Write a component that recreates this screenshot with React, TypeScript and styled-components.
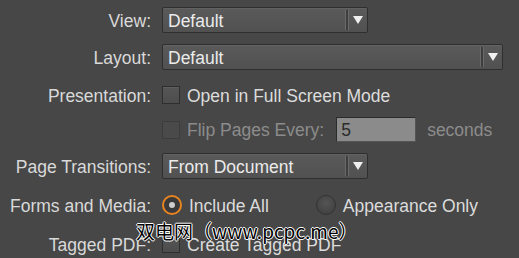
import React from "react";
import styled, { createGlobalStyle } from "styled-components";

const Global = createGlobalStyle`
  html, body { margin: 0; padding: 0; background: #474747; }
  body { font-family: "Liberation Sans", Arial, sans-serif; }
`;

const Page = styled.div`
  position: relative;
  width: 519px;
  height: 258px;
  overflow: hidden;
  background: #474747;
  padding-top: 7px;
  box-sizing: border-box;
`;

const Row = styled.div<{ $top: number; $h: number }>`
  display: flex;
  align-items: center;
  height: ${(p) => p.$h}px;
  margin-top: ${(p) => p.$top}px;
`;

const Label = styled.div`
  width: 151px;
  flex: none;
  text-align: right;
  color: #d9d9d9;
  font-size: 17.5px;
  padding-right: 11px;
  padding-top: 2px;
  box-sizing: content-box;
  white-space: nowrap;
`;

const Controls = styled.div`
  display: flex;
  align-items: center;
`;

const SelectBox = styled.div<{ $w: number }>`
  width: ${(p) => p.$w}px;
  height: 26px;
  box-sizing: border-box;
  border: 1px solid #2f2f2f;
  border-radius: 2px;
  background: linear-gradient(#5a5a5a, #515151);
  box-shadow: inset 0 1px 0 #626262;
  display: flex;
  align-items: center;
  color: #ebebeb;
  font-size: 17.5px;
  padding-left: 5px;
`;

const SelectText = styled.span`
  flex: 1;
  white-space: nowrap;
  padding-top: 2px;
`;

const Divider = styled.div`
  width: 4px;
  height: 20px;
  border-left: 1px solid #6a6a6a;
  border-right: 1px solid #6a6a6a;
  background: #3e3e3e;
  box-sizing: border-box;
  margin-right: 4px;
`;

const Arrow = styled.svg`
  width: 10px;
  height: 8px;
  margin-right: 4px;
`;

const Select = ({ w, value }: { w: number; value: string }) => (
  <SelectBox $w={w}>
    <SelectText>{value}</SelectText>
    <Divider />
    <Arrow viewBox="0 0 10 8">
      <polygon points="0,0 10,0 5,8" fill="#f0f0f0" />
    </Arrow>
  </SelectBox>
);

const Check = styled.span<{ $disabled?: boolean }>`
  width: 18px;
  height: 18px;
  box-sizing: border-box;
  border: 1px solid ${(p) => (p.$disabled ? "#3c3c3c" : "#2e2e2e")};
  background: ${(p) => (p.$disabled ? "#4a4a4a" : "linear-gradient(#555, #4d4d4d)")};
  box-shadow: ${(p) => (p.$disabled ? "none" : "inset 0 1px 0 #5e5e5e")};
  flex: none;
`;

const OptionText = styled.span<{ $disabled?: boolean }>`
  color: ${(p) => (p.$disabled ? "#8c8c8c" : "#dcdcdc")};
  font-size: 17.5px;
  margin-left: 7px;
  padding-top: 2px;
  white-space: nowrap;
`;

const Radio = styled.span<{ $on?: boolean }>`
  width: 20px;
  height: 20px;
  border-radius: 50%;
  box-sizing: border-box;
  flex: none;
  display: flex;
  align-items: center;
  justify-content: center;
  border: ${(p) => (p.$on ? "2px solid #e8841f" : "1px solid #333")};
  background: ${(p) => (p.$on ? "#3a3a3a" : "radial-gradient(circle at 50% 40%, #555, #3c3c3c)")};
  &::after {
    content: "";
    display: ${(p) => (p.$on ? "block" : "none")};
    width: 6px;
    height: 6px;
    border-radius: 50%;
    background: #cfcfcf;
  }
`;

const RadioGroup = styled.div<{ $gap: number }>`
  display: flex;
  align-items: center;
  margin-left: ${(p) => p.$gap}px;
`;

const NumInput = styled.div`
  width: 80px;
  height: 25px;
  box-sizing: border-box;
  border: 1px solid #2c2c2c;
  border-right-color: #555;
  border-bottom-color: #555;
  background: #8b8b8b;
  color: #2b2b2b;
  font-size: 17.5px;
  padding: 2px 0 0 4px;
  display: flex;
  align-items: center;
  margin-left: 12px;
`;

const Suffix = styled.span`
  color: #8c8c8c;
  font-size: 17.5px;
  margin-left: 11px;
  padding-top: 2px;
`;

const Watermark = styled.div`
  position: absolute;
  left: 136px;
  top: 221px;
  font-family: "Noto Sans CJK SC", "DejaVu Sans", sans-serif;
  font-size: 19px;
  line-height: 19px;
  color: #000;
  text-shadow: 1px 0 0 #fff, -1px 0 0 #fff, 0 1px 0 #fff, 0 -1px 0 #fff;
  white-space: nowrap;
`;

export default function App() {
  return (
    <>
      <Global />
      <Page>
        <Row $top={0} $h={26}>
          <Label>View:</Label>
          <Select w={206} value="Default" />
        </Row>
        <Row $top={11} $h={26}>
          <Label>Layout:</Label>
          <Select w={341} value="Default" />
        </Row>
        <Row $top={12} $h={26}>
          <Label>Presentation:</Label>
          <Controls>
            <Check />
            <OptionText>Open in Full Screen Mode</OptionText>
          </Controls>
        </Row>
        <Row $top={9} $h={25}>
          <Label />
          <Controls>
            <Check $disabled />
            <OptionText $disabled>Flip Pages Every:</OptionText>
            <NumInput>5</NumInput>
            <Suffix>seconds</Suffix>
          </Controls>
        </Row>
        <Row $top={11} $h={26}>
          <Label>Page Transitions:</Label>
          <Select w={206} value="From Document" />
        </Row>
        <Row $top={13} $h={26}>
          <Label>Forms and Media:</Label>
          <Controls>
            <Radio $on />
            <OptionText>Include All</OptionText>
            <RadioGroup $gap={47}>
              <Radio />
              <OptionText>Appearance Only</OptionText>
            </RadioGroup>
          </Controls>
        </Row>
        <Row $top={13} $h={26}>
          <Label>Tagged PDF:</Label>
          <Controls>
            <Check />
            <OptionText>Create Tagged PDF</OptionText>
          </Controls>
        </Row>
        <Watermark>双电网（www.pcpc.me）</Watermark>
      </Page>
    </>
  );
}
